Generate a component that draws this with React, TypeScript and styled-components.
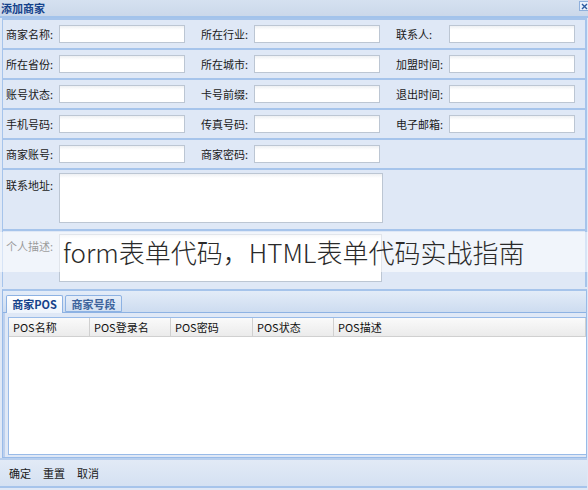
import React from "react";
import styled, { createGlobalStyle } from "styled-components";

const Global = createGlobalStyle`
  html, body { margin: 0; padding: 0; background: #ffffff; }
  body { font-family: "Noto Sans CJK SC", "Liberation Sans", sans-serif; font-size: 12px; }
  * { box-sizing: border-box; }
`;

const Win = styled.div`
  position: relative;
  width: 588px;
  height: 490px;
  overflow: hidden;
  background: #dfe8f6;
  display: flex;
  flex-direction: column;
`;

const TitleBar = styled.div`
  height: 16px;
  flex: none;
  display: flex;
  justify-content: space-between;
  align-items: center;
  background: linear-gradient(#d5e1f0, #cbd8ea);
  border-bottom: 2px solid #a3c3eb;
  box-sizing: content-box;
`;

const Title = styled.div`
  padding-left: 1px;
  font-size: 11px;
  line-height: 14px;
  font-weight: bold;
  color: #15428b;
`;

const Close = styled.div`
  align-self: flex-start;
  width: 9px;
  height: 10px;
  margin-top: 1px;
  border: 1px solid #8fb0dc;
  border-right: none;
  background: #eaf1fb;
  display: flex;
  align-items: center;
  justify-content: center;
`;

const Row = styled.div<{ $h: number; $top?: boolean }>`
  height: ${(p) => p.$h}px;
  flex: none;
  margin: 0 1px 0 2px;
  border-top: 2px solid #a6c4eb;
  border-left: 1px solid #a6c4eb;
  border-right: 2px solid #a6c4eb;
  background: #dfe8f6;
  display: flex;
  align-items: ${(p) => (p.$top ? "flex-start" : "center")};
  padding-top: ${(p) => (p.$top ? "3px" : "0")};
  padding-left: 3px;
`;

const Field = styled.div`
  width: 195px;
  flex: none;
  display: flex;
  align-items: inherit;
`;

const Label = styled.span<{ $pad?: number }>`
  width: 53px;
  flex: none;
  color: #1a1a1a;
  font-size: 11px;
  line-height: 16px;
  white-space: nowrap;
  padding-top: ${(p) => p.$pad ?? 0}px;
`;

const Input = styled.div<{ $w?: number; $h?: number }>`
  width: ${(p) => p.$w ?? 126}px;
  height: ${(p) => p.$h ?? 18}px;
  flex: none;
  border: 1px solid #bcc6d3;
  background: linear-gradient(#eef0f3 0px, #ffffff 4px, #ffffff);
`;

const TabPanel = styled.div`
  flex: none;
  height: 169px;
  margin: 2px 1px 0 2px;
  border: 1px solid #99bbe8;
  border-top: 2px solid #a6c4eb;
  display: flex;
  flex-direction: column;
  background: #dfe8f6;
`;

const TabStrip = styled.div`
  height: 22px;
  flex: none;
  display: flex;
  align-items: flex-end;
  gap: 2px;
  padding-left: 3px;
  background: linear-gradient(#e3ecf8, #cddcf0);
  border-bottom: 1px solid #8db2e3;
`;

const Tab = styled.div<{ $active?: boolean }>`
  width: 57px;
  height: ${(p) => (p.$active ? 18 : 17)}px;
  margin-bottom: ${(p) => (p.$active ? -1 : 0)}px;
  border: 1px solid #8db2e3;
  border-bottom: ${(p) => (p.$active ? "none" : "1px solid #8db2e3")};
  border-radius: 2px 2px 0 0;
  background: ${(p) => (p.$active ? "linear-gradient(#ffffff, #eef4fc)" : "linear-gradient(#e6eef9, #d2e0f2)")};
  color: ${(p) => (p.$active ? "#15428b" : "#3d639c")};
  font-weight: bold;
  font-size: 11px;
  line-height: 16px;
  text-align: center;
  white-space: nowrap;
`;

const TabBody = styled.div`
  flex: 1;
  padding: 4px 0 2px 3px;
  display: flex;
  background: #dfe8f6;
  border-left: 2px solid #bcd0ee;
`;

const Grid = styled.div`
  flex: 1;
  display: flex;
  flex-direction: column;
  background: #ffffff;
  border: 1px solid #99bbe8;
  border-right: none;
`;

const GridHead = styled.div`
  height: 19px;
  flex: none;
  display: flex;
  background: linear-gradient(#fafafa, #ebebeb);
  border-bottom: 1px solid #d0d0d0;
`;

const HeadCell = styled.div<{ $w?: number }>`
  width: ${(p) => (p.$w ? `${p.$w}px` : "auto")};
  flex: ${(p) => (p.$w ? "none" : "1")};
  padding-left: 4px;
  border-right: 1px solid #d0d0d0;
  font-size: 11px;
  line-height: 18px;
  color: #111;
  white-space: nowrap;
`;

const GridBody = styled.div`
  flex: 1;
  background: #ffffff;
`;

const Footer = styled.div`
  flex: none;
  height: 30px;
  margin: 0 1px 0 0;
  border-top: 2px solid #b8cfee;
  border-bottom: 2px solid #a6c4eb;
  background: linear-gradient(#e2eaf6, #d5e1f2);
  display: flex;
  align-items: center;
  gap: 12px;
  padding-left: 9px;
`;

const Btn = styled.span`
  font-size: 11px;
  color: #1a1a1a;
  cursor: pointer;
`;

const Watermark = styled.div`
  position: absolute;
  left: 0;
  right: 0;
  top: 232px;
  height: 40px;
  background: rgba(255, 255, 255, 0.55);
  padding-left: 63px;
  font-family: "Noto Sans CJK SC", "Noto Sans", sans-serif;
  font-weight: 300;
  font-size: 26px;
  line-height: 40px;
  color: #2a2a2a;
  white-space: nowrap;
  pointer-events: none;
`;

const rows = [
  ["商家名称:", "所在行业:", "联系人:"],
  ["所在省份:", "所在城市:", "加盟时间:"],
  ["账号状态:", "卡号前缀:", "退出时间:"],
  ["手机号码:", "传真号码:", "电子邮箱:"],
  ["商家账号:", "商家密码:"],
];

const cols: { t: string; w?: number }[] = [
  { t: "POS名称", w: 81 },
  { t: "POS登录名", w: 81 },
  { t: "POS密码", w: 82 },
  { t: "POS状态", w: 81 },
  { t: "POS描述" },
];

export default function App() {
  return (
    <>
      <Global />
      <Win>
        <TitleBar>
          <Title>添加商家</Title>
          <Close>
            <svg width="7" height="7" viewBox="0 0 7 7">
              <path d="M1 1L6 6M6 1L1 6" stroke="#2b5aa0" strokeWidth="1.4" />
            </svg>
          </Close>
        </TitleBar>
        {rows.map((r, i) => (
          <Row key={i} $h={30}>
            {r.map((l) => (
              <Field key={l}>
                <Label>{l}</Label>
                <Input />
              </Field>
            ))}
          </Row>
        ))}
        <Row $h={61} $top>
          <Label $pad={4}>联系地址:</Label>
          <Input $w={324} $h={50} />
        </Row>
        <Row $h={58} $top>
          <Label $pad={4}>个人描述:</Label>
          <Input $w={323} $h={48} />
        </Row>
        <TabPanel>
          <TabStrip>
            <Tab $active>商家POS</Tab>
            <Tab>商家号段</Tab>
          </TabStrip>
          <TabBody>
            <Grid>
              <GridHead>
                {cols.map((c) => (
                  <HeadCell key={c.t} $w={c.w}>
                    {c.t}
                  </HeadCell>
                ))}
              </GridHead>
              <GridBody />
            </Grid>
          </TabBody>
        </TabPanel>
        <Footer>
          <Btn>确定</Btn>
          <Btn>重置</Btn>
          <Btn>取消</Btn>
        </Footer>
        <Watermark>form表单代码，HTML表单代码实战指南</Watermark>
      </Win>
    </>
  );
}
